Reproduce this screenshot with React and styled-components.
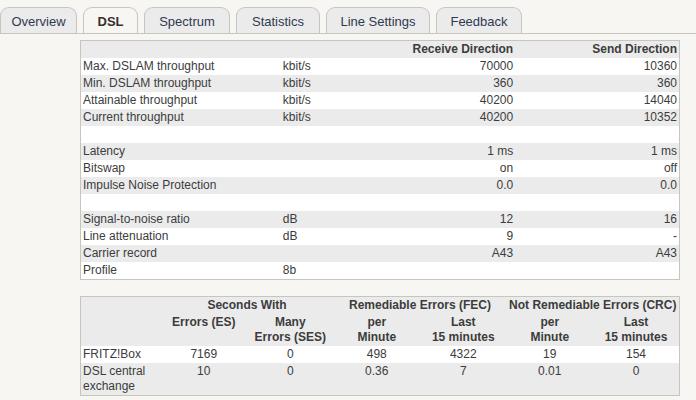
import React from 'react';
import styled, { createGlobalStyle } from 'styled-components';

const textColor = '#3c3c3c';
const borderColor = '#c6c6bf';
const rowGrey = '#ebebeb';
const pageBg = '#f7f6f2';

const GlobalStyle = createGlobalStyle`
  html, body {
    margin: 0;
    padding: 0;
    background: ${pageBg};
  }
  body {
    font-family: "Liberation Sans", Arial, sans-serif;
    font-size: 12px;
    color: ${textColor};
  }
`;

const Page = styled.div`
  width: 696px;
  height: 400px;
  overflow: hidden;
  padding-top: 7px;
  box-sizing: border-box;
`;

const TabBar = styled.ul`
  display: flex;
  gap: 6px;
  margin: 0;
  padding: 0;
  list-style: none;
  border-bottom: 1px solid ${borderColor};
  height: 26px;
`;

const Tab = styled.li`
  display: flex;
  align-items: center;
  justify-content: center;
  width: ${(p) => p.$width}px;
  height: 26px;
  box-sizing: border-box;
  border: 1px solid ${borderColor};
  border-bottom: none;
  border-radius: 9px 9px 0 0;
  background: ${(p) => (p.$active ? pageBg : '#ebebeb')};
  font-size: 13px;
  font-weight: ${(p) => (p.$active ? 'bold' : 'normal')};
  color: ${(p) => (p.$active ? '#3a2f2f' : '#2f3a4f')};
  padding-top: 1px;
`;

const Content = styled.div`
  display: flex;
  flex-direction: column;
  gap: 16px;
  padding: 6px 0 0 80px;
`;

const Table = styled.table`
  width: 600px;
  table-layout: fixed;
  border-collapse: collapse;
  border: 1px solid ${borderColor};
  line-height: 15px;

  td, th {
    padding: 1px 2px;
    white-space: nowrap;
    overflow: hidden;
  }

  tbody tr:nth-child(odd) { background: #fff; }
  tbody tr:nth-child(even) { background: ${rowGrey}; }
`;

const Head = styled.thead`
  background: ${rowGrey};
  th { font-weight: bold; }
`;

const Cell = styled.td`
  text-align: ${(p) => p.$align || 'left'};
  vertical-align: top;
`;

const HeadCell = styled.th`
  text-align: ${(p) => p.$align || 'center'};
  vertical-align: top;
`;

const ErrTable = styled(Table)`
  td, th { white-space: normal; }
  tbody tr:nth-child(odd) { background: #fff; }
  tbody tr:nth-child(even) { background: ${rowGrey}; }
`;

const tabs = [
  { label: 'Overview', width: 77 },
  { label: 'DSL', width: 55, active: true },
  { label: 'Spectrum', width: 86 },
  { label: 'Statistics', width: 84 },
  { label: 'Line Settings', width: 104 },
  { label: 'Feedback', width: 86 },
];

const lineRows = [
  ['Max. DSLAM throughput', 'kbit/s', '70000', '10360'],
  ['Min. DSLAM throughput', 'kbit/s', '360', '360'],
  ['Attainable throughput', 'kbit/s', '40200', '14040'],
  ['Current throughput', 'kbit/s', '40200', '10352'],
  null,
  ['Latency', '', '1 ms', '1 ms'],
  ['Bitswap', '', 'on', 'off'],
  ['Impulse Noise Protection', '', '0.0', '0.0'],
  null,
  ['Signal-to-noise ratio', 'dB', '12', '16'],
  ['Line attenuation', 'dB', '9', '-'],
  ['Carrier record', '', 'A43', 'A43'],
  ['Profile', '8b', '', ''],
];

const errorRows = [
  ['FRITZ!Box', '7169', '0', '498', '4322', '19', '154'],
  ['DSL central exchange', '10', '0', '0.36', '7', '0.01', '0'],
];

export default function App() {
  return (
    <Page>
      <GlobalStyle />
      <TabBar>
        {tabs.map((t) => (
          <Tab key={t.label} $width={t.width} $active={t.active}>{t.label}</Tab>
        ))}
      </TabBar>
      <Content>
        <Table>
          <colgroup>
            <col style={{ width: 200 }} />
            <col style={{ width: 120 }} />
            <col style={{ width: 114 }} />
            <col style={{ width: 164 }} />
          </colgroup>
          <Head>
            <tr>
              <HeadCell />
              <HeadCell />
              <HeadCell $align="right">Receive Direction</HeadCell>
              <HeadCell $align="right">Send Direction</HeadCell>
            </tr>
          </Head>
          <tbody>
            {lineRows.map((r, i) =>
              r ? (
                <tr key={i}>
                  <Cell>{r[0]}</Cell>
                  <Cell>{r[1]}</Cell>
                  <Cell $align="right">{r[2]}</Cell>
                  <Cell $align="right">{r[3]}</Cell>
                </tr>
              ) : (
                <tr key={i}>
                  <Cell colSpan={4}>&nbsp;</Cell>
                </tr>
              )
            )}
          </tbody>
        </Table>

        <ErrTable>
          <colgroup>
            <col style={{ width: 80 }} />
            <col />
            <col />
            <col />
            <col />
            <col />
            <col />
          </colgroup>
          <Head>
            <tr>
              <HeadCell />
              <HeadCell colSpan={2}>Seconds With</HeadCell>
              <HeadCell colSpan={2}>Remediable Errors (FEC)</HeadCell>
              <HeadCell colSpan={2}>Not Remediable Errors (CRC)</HeadCell>
            </tr>
            <tr>
              <HeadCell />
              <HeadCell>Errors (ES)</HeadCell>
              <HeadCell>Many<br />Errors (SES)</HeadCell>
              <HeadCell>per<br />Minute</HeadCell>
              <HeadCell>Last<br />15 minutes</HeadCell>
              <HeadCell>per<br />Minute</HeadCell>
              <HeadCell>Last<br />15 minutes</HeadCell>
            </tr>
          </Head>
          <tbody>
            {errorRows.map((r) => (
              <tr key={r[0]}>
                <Cell>{r[0]}</Cell>
                {r.slice(1).map((v, j) => (
                  <Cell key={j} $align="center">{v}</Cell>
                ))}
              </tr>
            ))}
          </tbody>
        </ErrTable>
      </Content>
    </Page>
  );
}
